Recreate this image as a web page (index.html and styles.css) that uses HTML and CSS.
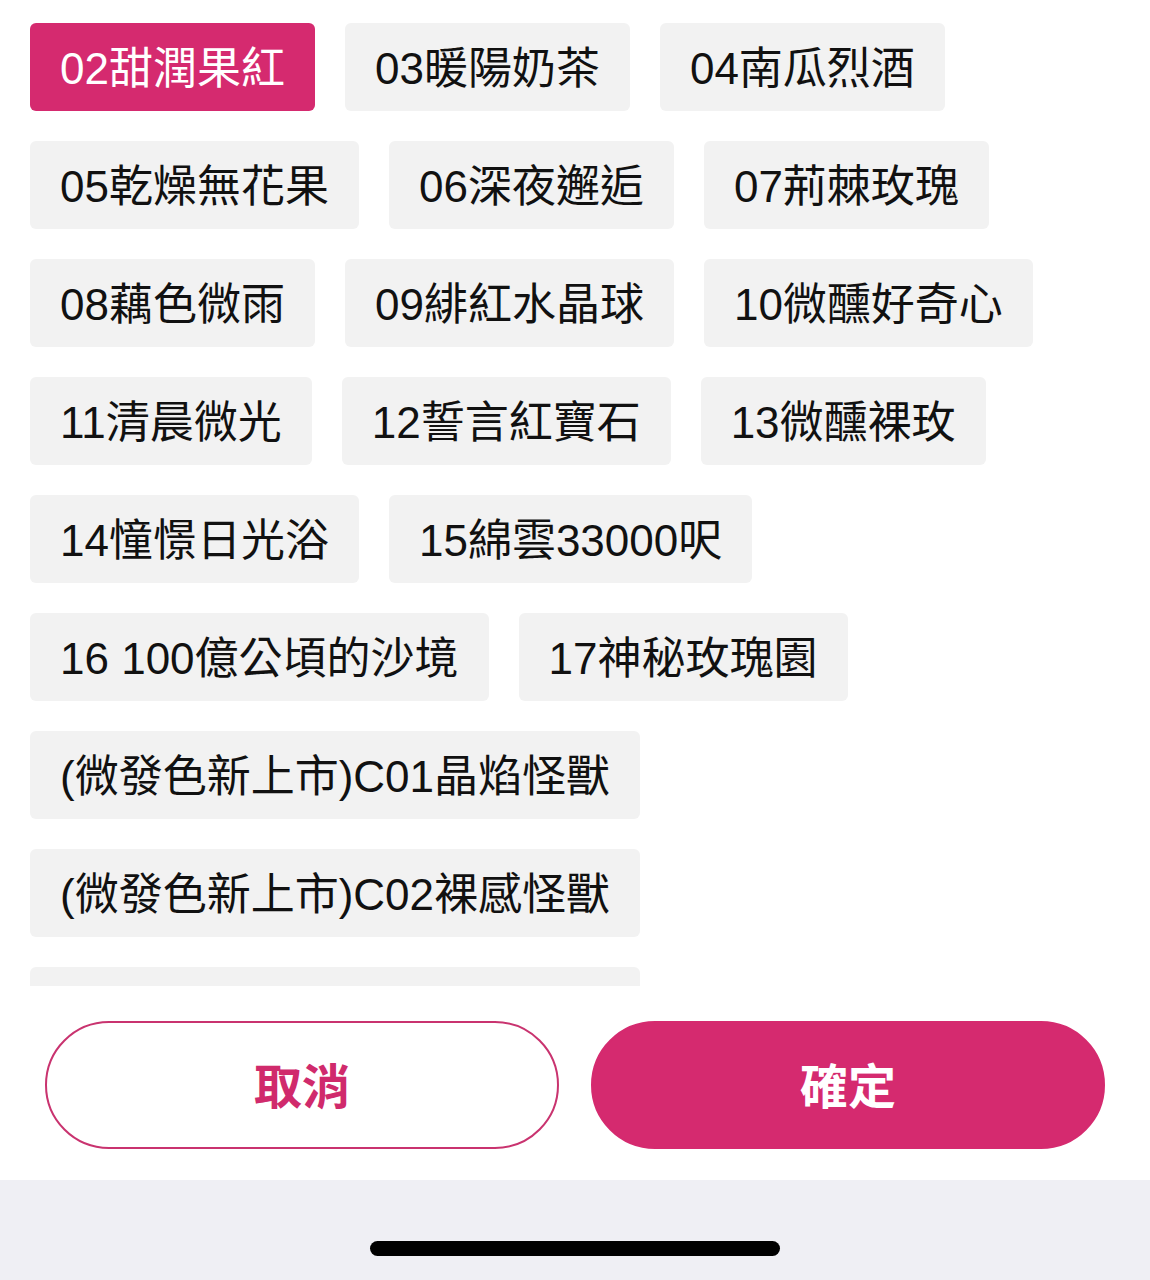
FILE: index.html
```html
<!DOCTYPE html>
<html lang="zh-Hant">
<head>
<meta charset="utf-8">
<title>選擇色號</title>
<link rel="stylesheet" href="styles.css">
</head>
<body>
<div class="sheet">
  <div class="list">
    <div class="chip chip-active">02甜潤果紅</div>
    <div class="chip">03暖陽奶茶</div>
    <div class="chip">04南瓜烈酒</div>
    <div class="chip">05乾燥無花果</div>
    <div class="chip">06深夜邂逅</div>
    <div class="chip">07荊棘玫瑰</div>
    <div class="chip">08藕色微雨</div>
    <div class="chip">09緋紅水晶球</div>
    <div class="chip">10微醺好奇心</div>
    <div class="chip">11清晨微光</div>
    <div class="chip">12誓言紅寶石</div>
    <div class="chip">13微醺裸玫</div>
    <div class="chip">14憧憬日光浴</div>
    <div class="chip">15綿雲33000呎</div>
    <div class="chip">16 100億公頃的沙境</div>
    <div class="chip">17神秘玫瑰園</div>
    <div class="chip">(微發色新上市)C01晶焰怪獸</div>
    <div class="chip">(微發色新上市)C02裸感怪獸</div>
    <div class="chip">(微發色新上市)C03粉霧怪獸</div>
  </div>
  <div class="actions">
    <button class="btn btn-cancel">取消</button>
    <button class="btn btn-ok">確定</button>
  </div>
</div>
<div class="home-bar">
  <div class="home-indicator"></div>
</div>
</body>
</html>
```
FILE: styles.css
```css
html, body {
  margin: 0;
  padding: 0;
  background: #ffffff;
  font-family: "Liberation Sans", "Noto Sans CJK TC", sans-serif;
}

.sheet {
  height: 1180px;
  background: #ffffff;
  display: flex;
  flex-direction: column;
}

.list {
  height: 963px;
  overflow: hidden;
  padding: 23px 30px 0 30px;
  display: flex;
  flex-wrap: wrap;
  align-content: flex-start;
  gap: 30px;
}

.chip {
  height: 88px;
  padding: 0 30px 4px 30px;
  display: flex;
  align-items: center;
  background: #f2f2f2;
  border-radius: 6px;
  font-size: 44px;
  color: #111111;
  white-space: nowrap;
  box-sizing: border-box;
}

.chip-active {
  background: #d52a6f;
  color: #ffffff;
}

.actions {
  margin-top: 35px;
  padding: 0 45px;
  display: flex;
  gap: 32px;
}

.btn {
  flex: 1;
  height: 128px;
  border-radius: 64px;
  font-family: "Noto Sans CJK TC", sans-serif;
  font-size: 48px;
  font-weight: 700;
  cursor: pointer;
  box-sizing: border-box;
  padding: 0 0 4px 0;
}

.btn-cancel {
  background: #ffffff;
  border: 2px solid #c9336f;
  color: #d02a6c;
}

.btn-ok {
  background: #d52a6f;
  border: 2px solid #d52a6f;
  color: #ffffff;
}

.home-bar {
  height: 100px;
  background: #efeff4;
  display: flex;
  justify-content: center;
  padding-top: 61px;
  box-sizing: border-box;
}

.home-indicator {
  width: 410px;
  height: 15px;
  border-radius: 8px;
  background: #000000;
}
```
